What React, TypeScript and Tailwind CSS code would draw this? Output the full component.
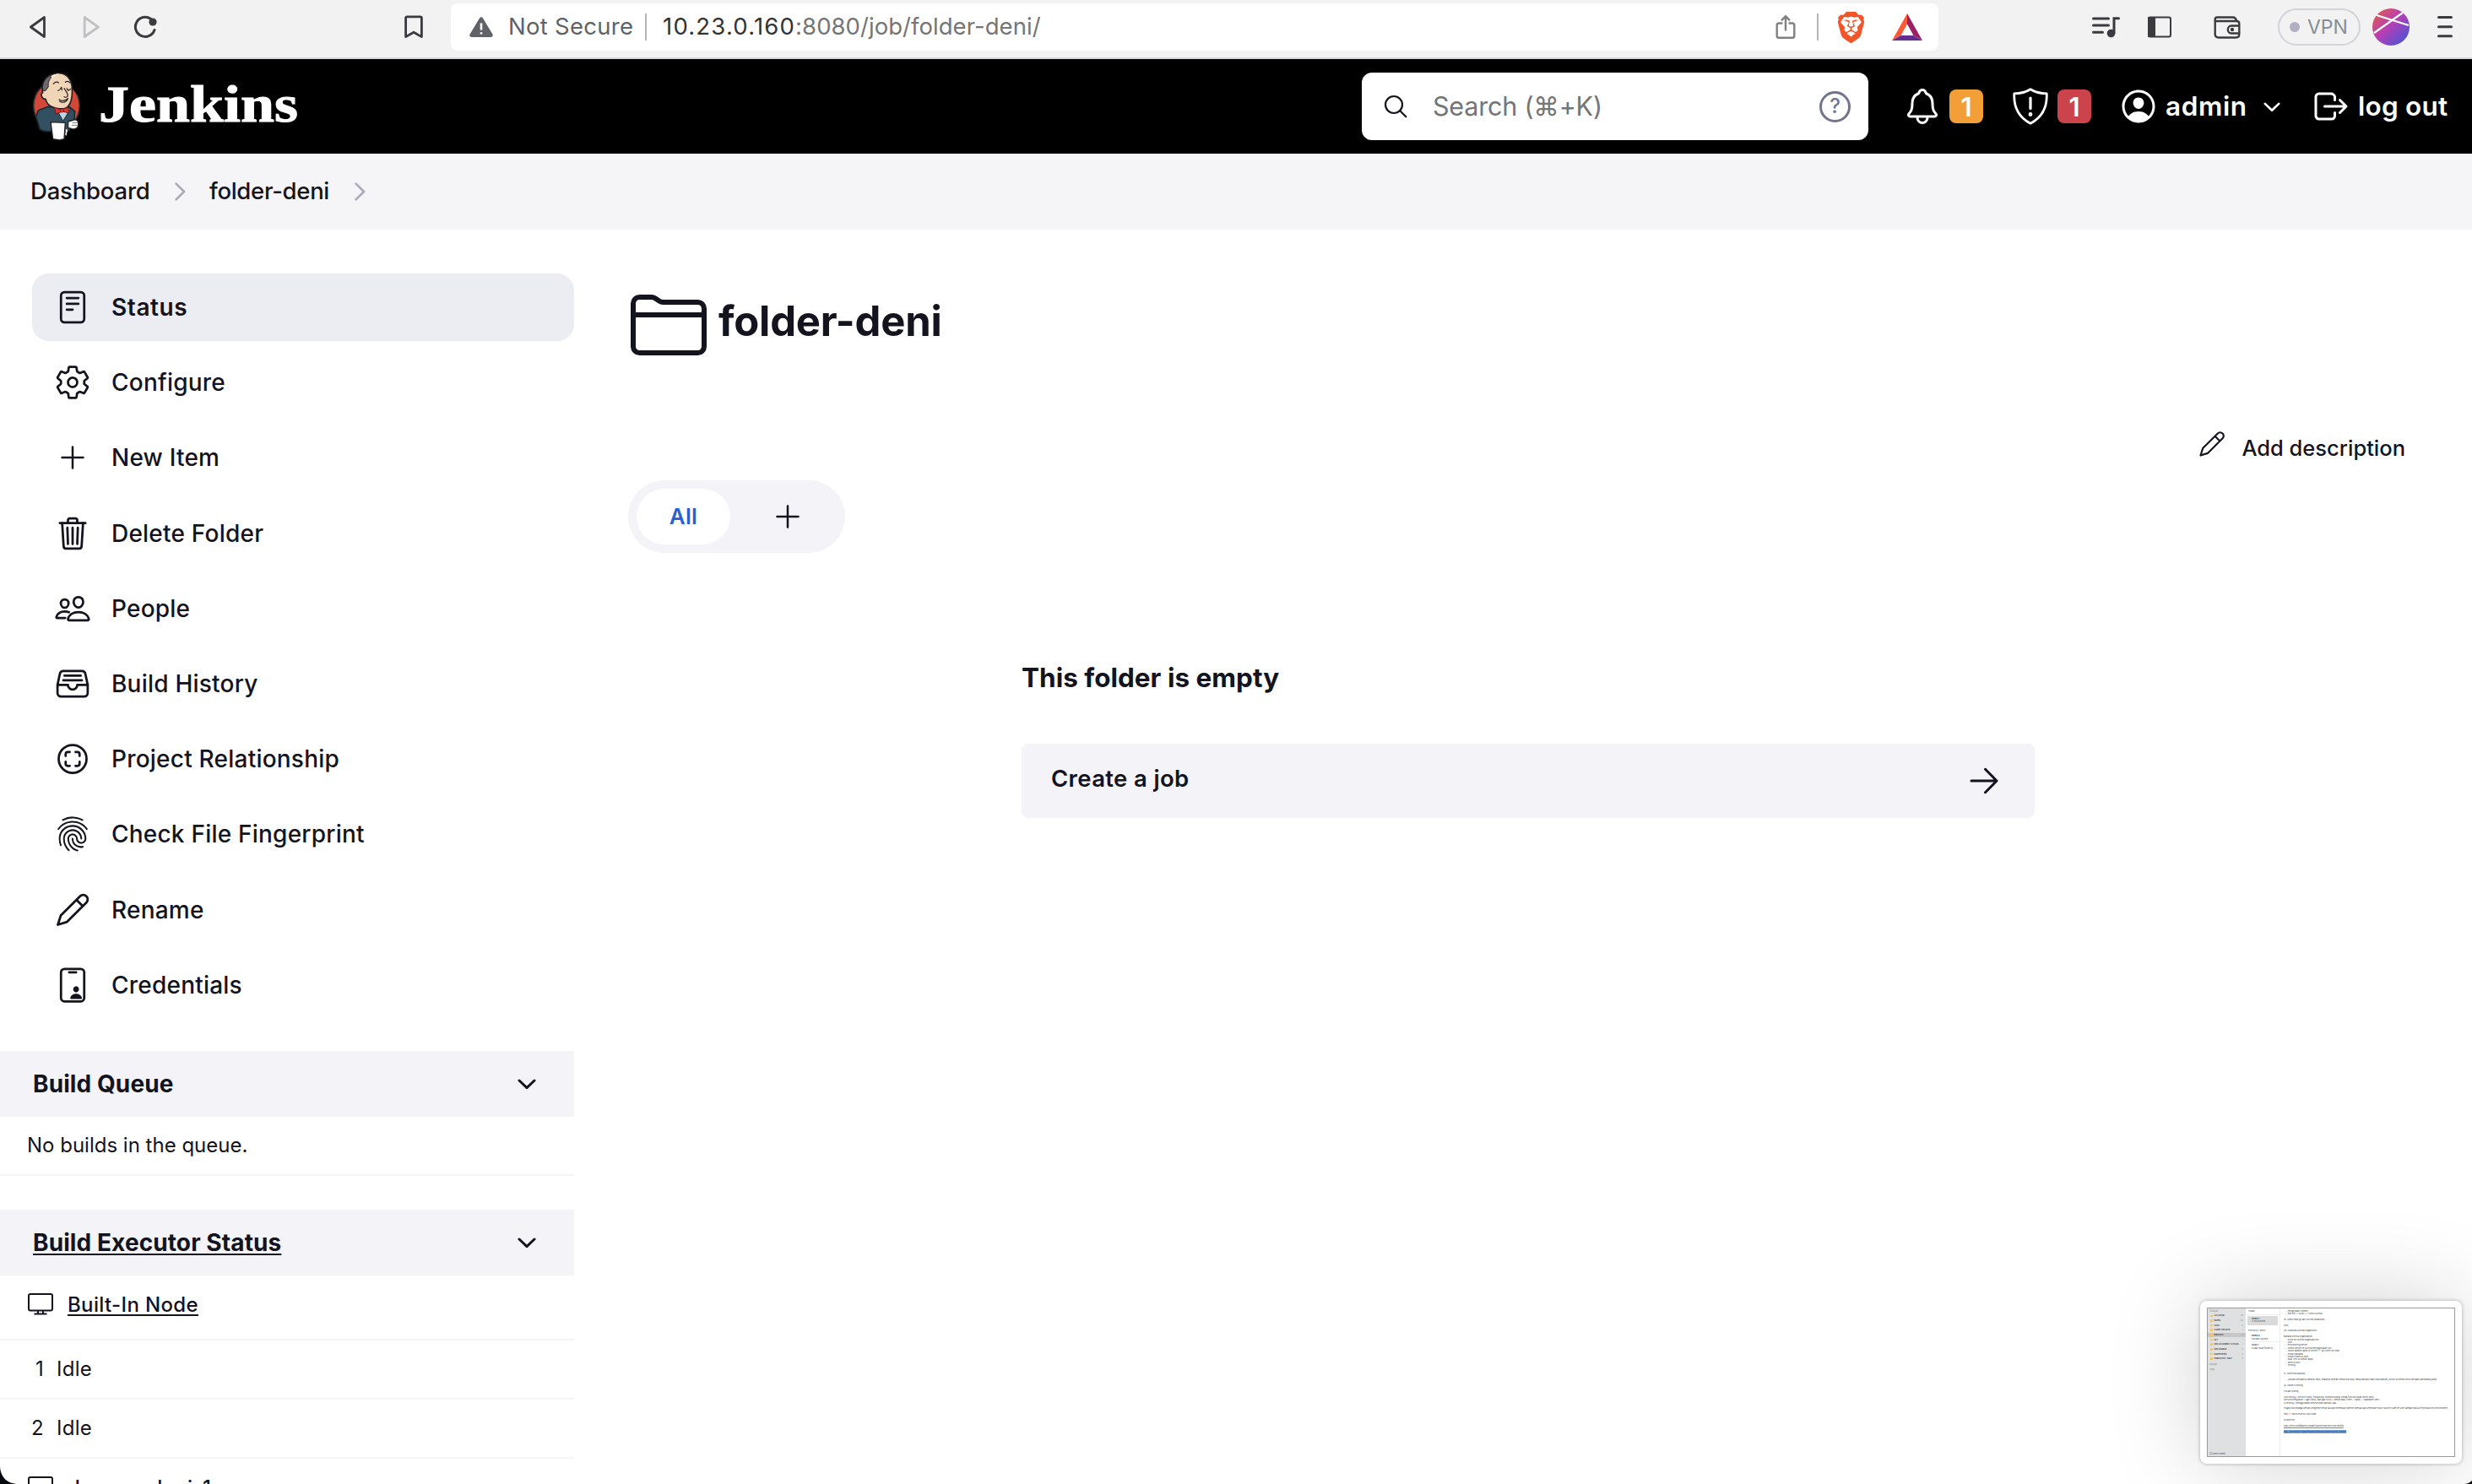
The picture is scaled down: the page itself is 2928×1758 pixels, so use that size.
import React from "react";
import {
  IoReaderOutline,
  IoSettingsOutline,
  IoTrashOutline,
  IoPeopleOutline,
  IoFileTrayFullOutline,
  IoScanCircleOutline,
  IoFingerPrintOutline,
  IoIdCardOutline,
  IoFolderOutline,
  IoNotificationsOutline,
  IoPersonCircleOutline,
  IoLogOutOutline,
} from "react-icons/io5";
import { SiBrave } from "react-icons/si";

type IconProps = { className?: string };

const Chevron = ({ className = "" }: IconProps) => (
  <svg className={className} viewBox="0 0 22 12" fill="none" stroke="currentColor" strokeLinecap="round" strokeLinejoin="round">
    <path d="M2 2l9 8.6L20 2" strokeWidth="3" />
  </svg>
);

const Plus = ({ className = "" }: IconProps) => (
  <svg className={className} viewBox="0 0 44 44" fill="none" stroke="currentColor" strokeWidth="2.5" strokeLinecap="round">
    <path d="M22 9.5v25M9.5 22h25" />
  </svg>
);

const Pencil = ({ className = "" }: IconProps) => (
  <svg className={className} viewBox="0 0 44 44" fill="none" stroke="currentColor" strokeWidth="2.8" strokeLinecap="round" strokeLinejoin="round">
    <path d="M4.5 39.5L8 28.6 30.8 5.8a5.3 5.3 0 0 1 7.5 7.5L15.4 36.1zM26.6 10l7.5 7.5" />
  </svg>
);

const Monitor = ({ className = "" }: IconProps) => (
  <svg className={className} viewBox="0 0 30 26" fill="none" stroke="currentColor" strokeWidth="2">
    <rect x="1" y="1" width="28" height="19.6" rx="2" />
    <path d="M12 21v3M18 21v3M7.5 24.6h15" />
  </svg>
);

const BreadcrumbChevron = () => (
  <svg className="h-[22px] w-[13px]" viewBox="0 0 13 22" fill="none" stroke="#a9a9bc" strokeWidth="2.6" strokeLinejoin="round" strokeLinecap="round">
    <path d="M1.6 1.6L11 11l-9.4 9.4" />
  </svg>
);

function Mascot() {
  return (
    <svg className="h-[81px] w-[58px]" viewBox="24 28 174 243" strokeLinejoin="round" strokeLinecap="round">
      <ellipse cx="111" cy="146" rx="82" ry="88" fill="#d24939" stroke="#2b2b2b" strokeWidth="5" />
      <path d="M66 40h60l-20 18-30 8z" fill="#000" />
      <path d="M24 28h60L52 70 24 120zM130 28h68v90l-20-20z" fill="#000" />
      <path d="M78 150l-32 12-8 22 14 46c14 8 30 8 42 6l62-2 18-40 2-28-22-18z" fill="#335061" stroke="#1d2a33" strokeWidth="5" />
      <path d="M112 160l22 40 26-42-26-8z" fill="#bcd4e6" stroke="#1d2a33" strokeWidth="3" />
      <path d="M62 100c-8-32 8-66 54-70 34-2 48 26 50 52 2 30-2 52-14 66-10 12-36 10-52 4-14-6-24-12-28-30-14 2-20-22-10-22z" fill="#f0d6b7" stroke="#231f20" strokeWidth="5" />
      <path d="M62 90c-4-22 8-42 26-52l4 8c-10 10-12 22-10 32l-10 14z" fill="#6d6b6d" stroke="#231f20" strokeWidth="3" />
      <path d="M94 48c4-10 12-14 24-14" fill="none" stroke="#fff" strokeWidth="4" opacity=".6" />
      <path d="M100 68c6-8 14-8 18-4M142 62c6-4 12-4 16 2M116 92c6-2 10-6 12-12l2 10M148 84l4 8 10-6M138 84c6 10 16 20 12 28-2 4-8 4-12 2M120 124c10 6 22 4 32-4-4 12-20 18-30 10" fill="none" stroke="#231f20" strokeWidth="3.6" />
      <path d="M104 152l22 8 26-8 4 20-24-6-22 8z" fill="#d33833" stroke="#7b1513" strokeWidth="3" />
      <circle cx="130" cy="163" r="6" fill="#ef3d3a" stroke="#7b1513" strokeWidth="2.5" />
      <path d="M90 204l52 2-4 58-16 4-24-4z" fill="#fff" stroke="#231f20" strokeWidth="4" />
      <path d="M152 202l20-6c12-2 18 4 16 20-2 12-14 14-22 12l-14-4z" fill="#fff" stroke="#231f20" strokeWidth="4" />
      <path d="M168 206h16M166 215h18" stroke="#55595c" strokeWidth="2.5" />
      <path d="M144 228l6 4-4 20-4-2z" fill="#fff" />
    </svg>
  );
}

function BrowserBar() {
  return (
    <div className="flex h-[70px] shrink-0 items-start border-b-2 border-[#d3d5d9] bg-[#f2f2f2] text-[#3b3b3f]">
      <div className="flex h-[64px] w-[534px] items-center pl-[34px]">
        <svg className="h-[28px] w-[22px]" viewBox="0 0 22 28" fill="none" stroke="currentColor" strokeWidth="2.8" strokeLinejoin="round">
          <path d="M18.5 2.5v23L2.4 14z" />
        </svg>
        <svg className="ml-[41px] h-[28px] w-[22px] text-[#c1c1c3]" viewBox="0 0 22 28" fill="none" stroke="currentColor" strokeWidth="2.8" strokeLinejoin="round">
          <path d="M3.2 2.5v23L19.4 14z" />
        </svg>
        <svg className="ml-[38px] h-[28px] w-[30px]" viewBox="0 0 30 28" fill="none" stroke="currentColor" strokeWidth="3" strokeLinecap="round">
          <path d="M21.5 4.2A11.6 11.6 0 1 0 26 17.5" />
          <circle cx="24" cy="8" r="4.6" fill="currentColor" stroke="none" />
        </svg>
        <svg className="ml-[292px] h-[28px] w-[22px]" viewBox="0 0 22 28" fill="none" stroke="currentColor" strokeWidth="2.8" strokeLinejoin="round">
          <path d="M1.6 3.4c0-1 .6-1.6 1.6-1.6h15.6c1 0 1.6.6 1.6 1.6v22.2L11 20.2l-9.4 5.4z" />
        </svg>
      </div>
      <div className="mt-1 flex h-[56px] w-[1762px] items-center rounded-[8px] bg-white pl-[22px]">
        <svg className="h-[26px] w-[28px]" viewBox="0 0 28 26">
          <path d="M12 2.400c.9-1.600 3.100-1.600 4 0l11.400 19.200c.9 1.600-.2 3.400-2 3.400H2.600c-1.800 0-2.900-1.800-2-3.400z" fill="#5f6368" />
          <path d="M14 8.500v8M14 19.300v2.200" stroke="#fff" strokeWidth="2.600" />
        </svg>
        <span className="ml-[18px] w-[162px] whitespace-nowrap text-[27.5px] leading-none tracking-[0.28px] text-[#5f6368]">Not Secure</span>
        <span className="h-[32px] w-[2px] bg-[#b4b4b4]" />
        <span className="ml-[19px] w-[1318px] whitespace-nowrap text-[27.5px] leading-none text-[#757575]">
          <span className="tracking-[1.2px] text-[#333]">10.23.0.160</span>
          <span className="tracking-[0.05px]">:8080/job/folder-deni/</span>
        </span>
        <svg className="h-[30px] w-[24px] text-[#808080]" viewBox="0 0 24 30" fill="none" stroke="currentColor" strokeWidth="2.4" strokeLinecap="round" strokeLinejoin="round">
          <path d="M7.500 10.500H4c-1.400 0-2.300.9-2.300 2.300v12.600c0 1.400.9 2.300 2.300 2.300h16c1.400 0 2.300-.9 2.300-2.300V12.800c0-1.400-.9-2.300-2.300-2.300h-3.500M12 18.500V2.500M7.700 6.600L12 2.200l4.300 4.400" />
        </svg>
        <span className="ml-[25px] h-[32px] w-[2px] bg-[#b4b4b4]" />
        <SiBrave className="ml-[20px] size-[37px] text-[#f1562a]" />
        <svg className="ml-[30px] h-[32px] w-[36px]" viewBox="0 0 36 32">
          <path d="M18 0L0 32l10.500-6L18 12.500z" fill="#ff5a36" />
          <path d="M18 0l18 32-10.500-6L18 12.500z" fill="#9e1f63" />
          <path d="M0 32h36l-10.500-6h-15z" fill="#662d91" />
        </svg>
      </div>
      <div className="flex h-[64px] grow items-center pl-[182px]">
        <svg className="h-[26px] w-[33px]" viewBox="0 0 33 26" fill="none" stroke="currentColor" strokeWidth="3" strokeLinecap="round">
          <path d="M1.500 3h18M1.500 11h18M1.500 19.300h11M26 20V2.800h5.500" />
          <circle cx="22.500" cy="20.500" r="4.800" fill="currentColor" stroke="none" />
        </svg>
        <svg className="ml-[33px] h-[26px] w-[28px]" viewBox="0 0 28 26" fill="none" stroke="currentColor" strokeWidth="2">
          <rect x="1" y="1.500" width="26" height="23" rx="2" />
          <path d="M1 2h7v22H1z" fill="currentColor" />
        </svg>
        <svg className="ml-[50px] h-[27px] w-[32px]" viewBox="0 0 32 27" fill="none" stroke="currentColor" strokeWidth="2.400" strokeLinejoin="round">
          <path d="M2 6h25c2 0 3.300 1.200 3.300 3v12.500c0 2.500-1.500 4-4 4H5.500c-2.300 0-3.800-1.500-3.800-4V4c0-1.600 1-2.500 2.500-2.500H23c2 0 3.500 2 4.500 4.500" />
          <path d="M30.300 11.500H21c-5.500 0-5.500 9 0 9h9.300" />
          <circle cx="22" cy="16" r="1" fill="currentColor" />
        </svg>
        <span className="ml-[44px] flex h-[44px] w-[98px] items-center rounded-full border-2 border-[#d2d3d8] pl-[12px]">
          <span className="size-[12px] rounded-full bg-[#b0b0c2]" />
          <span className="ml-[9px] text-[23px] leading-none text-[#868e96]">VPN</span>
        </span>
        <svg className="ml-[14px] size-[44px]" viewBox="0 0 44 44">
          <defs>
            <linearGradient id="avatar" x1="0" y1="0" x2="1" y2="1">
              <stop offset="0.050" stopColor="#e25b4b" />
              <stop offset="0.450" stopColor="#b93fb3" />
              <stop offset="1" stopColor="#3457dd" />
            </linearGradient>
          </defs>
          <circle cx="22" cy="22" r="22" fill="url(#avatar)" />
          <path d="M2 29L36 5M5 8l38 12" stroke="#fff" strokeWidth="2.200" />
        </svg>
        <svg className="ml-[33px] h-[28px] w-[18px]" viewBox="0 0 18 28" stroke="currentColor" strokeWidth="3" strokeLinecap="round">
          <path d="M1.500 2.500h15M1.500 13.700h15M1.500 24.700h15" />
        </svg>
      </div>
    </div>
  );
}

function Header() {
  return (
    <header className="flex h-[112px] shrink-0 items-center bg-black text-white">
      <div className="flex w-[1613px] items-center pl-[38px]">
        <Mascot />
        <span className="ml-[21px] origin-left scale-x-[1.18] pb-[5px] font-['Liberation_Serif'] text-[61px] leading-none font-bold [-webkit-text-stroke:1px_white]">Jenkins</span>
      </div>
      <div className="flex h-[80px] w-[600px] items-center rounded-[12px] bg-white pl-[26px]">
        <svg className="h-[28px] w-[28px] text-[#14141f]" viewBox="0 0 28 28" fill="none" stroke="currentColor" strokeWidth="2.200" strokeLinecap="round">
          <circle cx="12" cy="12" r="10" />
          <path d="M19.300 19.300l7 7" />
        </svg>
        <span className="ml-[30px] w-[458px] text-[30.5px] leading-none tracking-[-0.2px] whitespace-nowrap text-[#757575]">Search (⌘+K)</span>
        <span className="flex size-[37px] items-center justify-center rounded-full border-3 border-[#73738c] text-[24px] leading-none font-medium text-[#73738c]">?</span>
      </div>
      <IoNotificationsOutline className="ml-[40px] size-[48px]" />
      <span className="ml-[8px] flex size-[40px] items-center justify-center rounded-[8px] bg-[#f29f38] text-[31px] leading-none font-semibold">1</span>
      <svg className="ml-[35px] h-[44px] w-[42px]" viewBox="0 0 42 44" fill="none" stroke="currentColor" strokeWidth="2.800" strokeLinejoin="round" strokeLinecap="round">
        <path d="M21 1.800C16 5 8 6.800 1.800 6.800 1 22 6.500 34.500 21 42.200 35.500 34.500 41 22 40.200 6.800 34 6.800 26 5 21 1.800z" />
        <path d="M21 12v12.500" strokeWidth="3.200" />
        <circle cx="21" cy="31.500" r="1" />
      </svg>
      <span className="ml-[11px] flex size-[40px] items-center justify-center rounded-[8px] bg-[#cc444b] text-[31px] leading-none font-semibold">1</span>
      <IoPersonCircleOutline className="ml-[32px] size-[48px]" />
      <span className="ml-[8px] w-[116px] text-[31.5px] leading-none font-semibold tracking-[0.6px]">admin</span>
      <Chevron className="h-[11px] w-[20px]" />
      <IoLogOutOutline className="ml-[36px] size-[48px]" />
      <span className="ml-[8px] text-[31.5px] leading-none font-semibold tracking-[0.25px] whitespace-nowrap">log out</span>
    </header>
  );
}

const menu: { label: string; icon: React.ReactNode; active?: boolean }[] = [
  { label: "Status", icon: <IoReaderOutline className="size-[44px]" />, active: true },
  { label: "Configure", icon: <IoSettingsOutline className="size-[44px]" /> },
  { label: "New Item", icon: <Plus className="size-[44px]" /> },
  { label: "Delete Folder", icon: <IoTrashOutline className="size-[44px]" /> },
  { label: "People", icon: <IoPeopleOutline className="size-[44px]" /> },
  { label: "Build History", icon: <IoFileTrayFullOutline className="size-[44px]" /> },
  { label: "Project Relationship", icon: <IoScanCircleOutline className="size-[44px]" /> },
  { label: "Check File Fingerprint", icon: <IoFingerPrintOutline className="size-[44px]" /> },
  { label: "Rename", icon: <Pencil className="size-[44px]" /> },
  { label: "Credentials", icon: <IoIdCardOutline className="size-[44px]" /> },
];

function PaneHeader({ title, underlined = false }: { title: string; underlined?: boolean }) {
  return (
    <div className="flex h-[78px] items-center justify-between bg-[#f3f3f8] pr-[45px] pl-[39px]">
      <span className={"text-[28px] leading-none font-bold tracking-[0.1px] " + (underlined ? "underline decoration-2 underline-offset-[3px]" : "")}>
        {title}
      </span>
      <Chevron className="h-[12px] w-[22px]" />
    </div>
  );
}

function NodeRow({ name }: { name: string }) {
  return (
    <div className="flex h-[77px] items-start border-b-2 border-[#f3f3f8] pt-[21px] pl-[33px]">
      <Monitor className="h-[26px] w-[30px]" />
      <span className="ml-[17px] text-[24px] leading-[27px] font-medium tracking-[0.35px] underline decoration-2 underline-offset-[3px]">{name}</span>
    </div>
  );
}

function ExecutorRow({ n }: { n: number }) {
  return (
    <div className="flex h-[70px] items-center border-b-2 border-[#f3f3f8] text-[24px] leading-none tracking-[0.3px]">
      <span className="w-[52px] text-right">{n}</span>
      <span className="ml-[15px]">Idle</span>
    </div>
  );
}

function Sidebar() {
  return (
    <aside className="w-[680px] shrink-0 pt-[52px]">
      <nav className="flex flex-col gap-[9.2px] pl-[38px]">
        {menu.map((m) => (
          <a key={m.label} className={"flex h-[80px] items-center rounded-[20px] pl-[26px] " + (m.active ? "bg-[#ecedf3] font-semibold" : "font-medium")}>
            {m.icon}
            <span className={"ml-[24px] text-[28px] leading-none " + (m.active ? "tracking-[0.6px]" : "tracking-[0.22px]")}>{m.label}</span>
          </a>
        ))}
      </nav>
      <section className="mt-[38px]">
        <PaneHeader title="Build Queue" />
        <div className="flex h-[70px] items-center border-b-2 border-[#f3f3f8] pl-[32px] text-[24px] leading-none">No builds in the queue.</div>
      </section>
      <section className="mt-[40px]">
        <PaneHeader title="Build Executor Status" underlined />
        <NodeRow name="Built-In Node" />
        <ExecutorRow n={1} />
        <ExecutorRow n={2} />
        <NodeRow name="devops-deni-1" />
      </section>
    </aside>
  );
}

function Content() {
  return (
    <main className="grow pt-[65px] pl-[64px]">
      <div className="flex h-[96px] items-center">
        <IoFolderOutline className="size-[96px]" />
        <h1 className="ml-[11px] pb-[10px] text-[49px] leading-none font-bold tracking-[-0.2px]">folder-deni</h1>
      </div>
      <div className="mt-[78px] flex h-[40px] items-center justify-end pr-[79px]">
        <Pencil className="mb-[10px] size-[34px]" />
        <span className="ml-[18px] text-[25.5px] leading-none font-medium">Add description</span>
      </div>
      <div className="mt-[18px] flex h-[86px] w-[257px] items-center rounded-full bg-[#f3f3f8] pl-[10px]">
        <span className="flex h-[66px] w-[111px] items-center justify-center rounded-full bg-white text-[26px] leading-none font-semibold tracking-[0.3px] text-[#2a5fcf]">All</span>
        <Plus className="ml-[46px] size-[44px]" />
      </div>
      <div className="mt-[132px] ml-[466px] w-[1200px]">
        <h2 className="text-[31.5px] leading-[32px] font-bold">This folder is empty</h2>
        <a className="mt-[62px] flex h-[88px] items-center justify-between rounded-[8px] bg-[#f3f3f8] pr-[43px] pl-[35px]">
          <span className="pb-[5px] text-[27.5px] leading-none font-semibold tracking-[0.35px]">Create a job</span>
          <svg className="h-[32px] w-[34px]" viewBox="0 0 34 32" fill="none" stroke="currentColor" strokeWidth="3" strokeLinecap="round" strokeLinejoin="round">
            <path d="M2 16h30M18.500 2.300L32 16 18.500 29.700" />
          </svg>
        </a>
      </div>
    </main>
  );
}

const folders: [string, string][] = [
  ["All iCloud", "49"],
  ["Notes", "26"],
  ["AWS", "8"],
  ["Cyber Security", "1"],
  ["DEVOPS", "3"],
  ["GIT", "1"],
  ["IDN ACADEMY SYSAD...", "1"],
  ["IDN Silabus", "4"],
  ["Kubernetes", "2"],
  ["PREAPOST TEST", "4"],
];

const noteLines = [
  "   -  Pengenalan commit",
  "   -  Edit file => push => check GitHub",
  "",
  "19. Ambil repo git dari GitHub kolaborasi",
  "",
  "Fork",
  "",
  "20. Kolborasi GitHub organitions",
  "",
  "Bahasa GitHub organization",
  "   -  Invite ke GitHub organisasi idn",
  "   -  Fork",
  "   -  Provisioning server",
  "   -  Konek server ke GitHub menggunakan ssh",
  "   -  Clone sample-apps to server => git clone link repo",
  "   -  Install MariaDB",
  "   -  Install nodejs & npm",
  "   -  Buat .env di simple-apps",
  "   -  NPM START",
  "   -  Testing",
  "",
  "",
  "21. Workflow aplikasi",
  "",
  "   -  Aplikasi berjalan di deposit repo, tetapnya setelah ketika kita stop, maka aplikasi tidak bisa diakses, butuh systemd untuk berjalan dibelakang layar",
  "",
  "22. Node js testing",
  "",
  "3 buah testing",
  "",
  "Unit testing = service (input, fungsional, eksekusi biasa, setiap function akan dicek (dev)",
  "Service/Integration = gak (input, dan gak turus = simple app, client -> apps -> database (dev)",
  "UI testing = penggunakan keseluruhan aplikasi (qa)",
  "",
  "Tugas kita sebagai devops engineer setup tau dan membuat pipeline dimulai dari developer push source code ke scm sampai masuk ke production environment",
  "",
  "http => harus muncul 200 code",
  "",
  "$ npm test",
  "",
];

function ScreenshotPreview() {
  return (
    <div className="absolute top-[1541px] left-[2606px] h-[193px] w-[310px] rounded-[8px] bg-white p-[8px] shadow-[0_0_4px_rgba(0,0,0,0.3),0_0_110px_rgba(0,0,0,0.18)]">
      <div className="flex h-[177px] w-[294px] overflow-hidden border border-[#9a9a9a] bg-white text-[3.3px] text-[#444]">
        <div className="flex w-[45px] shrink-0 flex-col bg-[#dfe0e2] pt-[2px]">
          <span className="pl-[2px] leading-[3px] text-[#888]">iCloud</span>
          <div className="pt-px">
            {folders.map(([name, count]) => (
              <div key={name} className={"flex h-[5.65px] items-center pr-[3px] pl-[3px] leading-none whitespace-nowrap " + (name === "DEVOPS" ? "bg-[#c6c7c6]" : "")}>
                <span className="mr-[1.5px] h-[2.5px] w-[3px] rounded-[0.5px] bg-[#ecc56d]" />
                <span className="grow text-[2.7px] font-medium text-[#222]">{name}</span>
                <span className="text-[2.7px] text-[#999]">{count}</span>
              </div>
            ))}
          </div>
          <span className="mt-[3px] pl-[2px] text-[2.7px] leading-[3px] text-[#888]">Google</span>
          <span className="mt-[3px] pl-[2px] text-[2.7px] leading-[3px] text-[#888]">Tags</span>
          <span className="mt-auto pb-px pl-[2px] text-[2.7px] leading-[3px]">⊕ New Folder</span>
        </div>
        <div className="w-[41px] shrink-0 border-r border-[#ededed] text-[2.7px] leading-[3.4px]">
          <div className="h-[7.5px] border-b border-[#eee] pt-[2px] pl-[3px]">Today</div>
          <div className="mx-[2px] mt-px h-[11.5px] rounded-[1px] bg-[#dadada] pt-[2.5px] pl-[5px]">
            <b>News 1</b>
            <div>11:00 Outline</div>
          </div>
          <div className="mt-[5px] pl-[3px]">Previous 7 Days</div>
          <div className="mt-[3px] ml-[7px] h-[9px] border-b border-[#eee]">
            <b>News 2</b>
            <div>Sunday Outline</div>
          </div>
          <div className="mt-[2px] ml-[7px] whitespace-nowrap">
            <b>HARI 1</b>
            <div>Friday Buat folder p...</div>
          </div>
        </div>
        <div className="min-w-0 grow pt-[1.5px] pl-[4px] text-[2.7px] leading-[3.42px] whitespace-pre">
          {noteLines.map((line, i) => (
            <div key={i} className="h-[3.42px] tracking-[-0.06px]">
              {line}
            </div>
          ))}
          <div className="h-[3.42px]">
            <span className="underline decoration-[#d66] decoration-[0.5px]">sqp_cce5c48dfaa987536aaf43a59559a7d7872679a5fa</span>
          </div>
          <div className="mt-[3.42px]">
            <span className="bg-[#6f9fd8] text-[#1c3c6c]">sqp_2085b6c077b8a7fdb902fb0d60268db7ca30c27a588</span>
          </div>
        </div>
      </div>
    </div>
  );
}

export default function App() {
  return (
    <div className="relative flex h-[1758px] w-[2928px] flex-col overflow-hidden bg-white font-['Inter',sans-serif] text-[#14141f]">
      <BrowserBar />
      <Header />
      <div className="flex h-[90px] shrink-0 items-center bg-[#f5f5f8] pl-[36px] text-[27.5px] leading-none font-medium">
        <span className="w-[171px] tracking-[-0.2px]">Dashboard</span>
        <BreadcrumbChevron />
        <span className="ml-[28px] w-[172px] tracking-[-0.3px]">folder-deni</span>
        <BreadcrumbChevron />
      </div>
      <div className="flex min-h-0 grow">
        <Sidebar />
        <Content />
      </div>
      <ScreenshotPreview />
      <svg className="absolute bottom-0 left-0 size-[22px]" viewBox="0 0 22 22">
        <path d="M0 0c0 13 8 22 22 22H0z" fill="#05080c" />
      </svg>
      <svg className="absolute right-0 bottom-0 size-[12px]" viewBox="0 0 22 22">
        <path d="M22 14c-4 5-10 8-22 8h22z" fill="#111" />
      </svg>
    </div>
  );
}
